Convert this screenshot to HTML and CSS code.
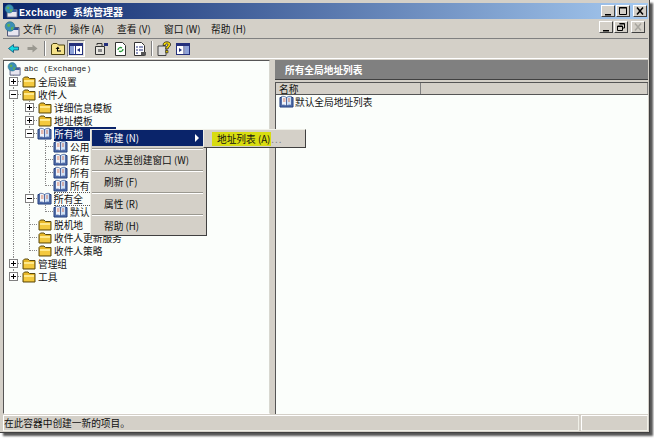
FILE: index.html
```html
<!DOCTYPE html>
<html lang="zh-CN">

<head>
    <meta charset="UTF-8">
    <title>Exchange 系统管理器</title>
    <link rel="stylesheet" href="styles.css">
</head>

<body>
    <!-- shared icons -->
    <svg class="defs" width="0" height="0">
        <symbol id="folder" viewBox="0 0 14 13">
            <path d="M1 3.500 2.500 2H6l1.500 1.500H13V12H1Z" fill="#e8b828" stroke="#5a4a10" stroke-width="1"/>
            <path d="M2 5h10v2H2Z" fill="#ffe98a"/>
            <path d="M2 7h10v4H2Z" fill="#f3c93e"/>
        </symbol>
        <symbol id="book" viewBox="0 0 15 13">
            <path d="M1 2.500h13V12H1Z" fill="#5a78b8" stroke="#1f3a78"/>
            <path d="M2.500 1.500C4.500 1 6 1.500 7.500 2.500V11C6 10 4.500 9.800 2.500 10.300Z" fill="#eef3fb" stroke="#33508e" stroke-width=".7"/>
            <path d="M12.500 1.500C10.500 1 9 1.500 7.500 2.500V11C9 10 10.500 9.800 12.500 10.300Z" fill="#cfe0f5" stroke="#33508e" stroke-width=".7"/>
            <path d="M4 4h2.500M4 6h2.500M9 4h2M9 6h2" stroke="#d0603a" stroke-width=".8"/>
        </symbol>
        <symbol id="mmc" viewBox="0 0 16 16">
            <path d="M3.500 6.500H15V15H3.500Z" fill="#e8e6f0" stroke="#50587a"/>
            <path d="M4 7h10.500v2H4Z" fill="#2c4f9c"/>
            <circle cx="6" cy="5.500" r="4.800" fill="#3a8fb8" stroke="#2c6f80" stroke-width=".6"/>
            <path d="M3 3.500C5 2 7 3 6 5 5 7 3 6 3 3.500ZM7 6.500 9.500 5.500 9 8.500 7 9Z" fill="#5cae5a"/>
        </symbol>
        <symbol id="plus" viewBox="0 0 9 9">
            <rect x=".5" y=".5" width="8" height="8" fill="#fff" stroke="#808080"/>
            <path d="M2 4.500h5M4.500 2v5" stroke="#000"/>
        </symbol>
        <symbol id="minus" viewBox="0 0 9 9">
            <rect x=".5" y=".5" width="8" height="8" fill="#fff" stroke="#808080"/>
            <path d="M2 4.500h5" stroke="#000"/>
        </symbol>
    </svg>

    <div class="window">
        <div class="titlebar">
            <svg class="title-icon" width="14" height="14"><use href="#mmc"/></svg>
            <span class="title-text">Exchange 系统管理器</span>
            <div class="caption-btns">
                <button class="cap-btn"><svg width="12" height="10"><path d="M3 8h6v1.500H3Z" fill="#000"/></svg></button>
                <button class="cap-btn"><svg width="12" height="10"><path d="M2.500 1.500h7v7h-7ZM2 2h8" fill="none" stroke="#000"/></svg></button>
                <button class="cap-btn gap"><svg width="12" height="10"><path d="M3 1.500 9 8.500M9 1.500 3 8.500" stroke="#000" stroke-width="1.500"/></svg></button>
            </div>
        </div>

        <div class="menubar">
            <svg class="menu-icon" width="16" height="16"><use href="#mmc"/></svg>
            <span class="menu-item">文件 (F)</span>
            <span class="menu-item">操作 (A)</span>
            <span class="menu-item">查看 (V)</span>
            <span class="menu-item">窗口 (W)</span>
            <span class="menu-item">帮助 (H)</span>
            <div class="mdi-btns">
                <button class="cap-btn"><svg width="12" height="10"><path d="M3 8h6v1.500H3Z" fill="#000"/></svg></button>
                <button class="cap-btn"><svg width="12" height="10"><path d="M4.500 1.500h5v4.500h-1.500M2.500 4h5v4.500h-5ZM2.500 4.500h5M4.500 2h5" fill="none" stroke="#000"/></svg></button>
                <button class="cap-btn gap"><svg width="12" height="10"><path d="M3 1.500 9 8.500M9 1.500 3 8.500" stroke="#a8a69f" stroke-width="1.500"/></svg></button>
            </div>
        </div>

        <div class="toolbar">
            <svg class="tool" width="11" height="11"><path d="M.5 5.500 5.500 1.500V4h5v3h-5v2.500Z" fill="#18d8e0" stroke="#00406a" stroke-width=".7"/></svg>
            <svg class="tool fwd" width="11" height="11"><path d="M10.500 5.500 5.500 1.500V4H.5v3h5v2.500Z" fill="#9a9890"/></svg>
            <span class="sep"></span>
            <svg class="tool" width="14" height="13"><path d="M.5 3 2 1.500h4L7.500 3h6v9.500H.5Z" fill="#f5e28a" stroke="#4a4210"/><path d="M7 4.500 4.500 7H6v2.500h4V8.500H7V7h1.500Z" fill="#000"/></svg>
            <span class="tool-pressed"><svg width="14" height="12"><rect x=".5" y=".5" width="13" height="11" fill="#fff" stroke="#24307c"/><rect x="1" y="1" width="12" height="2" fill="#24307c"/><path d="M1 3h4v8H1Z" fill="#8ea2d8"/><path d="M6.500 3v8" stroke="#24307c"/><path d="M8 7 11 5v4Z" fill="#24307c"/></svg></span>
            <svg class="tool" width="15" height="13"><path d="M1.500 4.500h9v8h-9Z" fill="#e8e6e0" stroke="#333"/><path d="M3 3V1.500h5V4" fill="none" stroke="#333"/><path d="M4 7h4v3H4Z" fill="#888"/><path d="M10 1h4v3h-4Z" fill="#24307c"/></svg>
            <svg class="tool t2" width="13" height="14"><path d="M1.500.5h7l3 3v10h-10Z" fill="#fff" stroke="#333"/><path d="M4 8a2.500 2.500 0 0 1 4-2M9 7a2.500 2.500 0 0 1-4 2" fill="none" stroke="#2a9a3a" stroke-width="1.300"/></svg>
            <svg class="tool t2b" width="14" height="14"><path d="M1.500.5h7l3 3v10h-10Z" fill="#fff" stroke="#333"/><path d="M3 5h2M3 8h2M3 11h2M6 5h4M6 8h4" stroke="#24307c"/><path d="M8 10h5v3.500H8Z" fill="#555"/></svg>
            <span class="sep sep2"></span>
            <svg class="tool" width="15" height="15"><path d="M1 5h8v9.500H1Z" fill="#ddd" stroke="#444"/><path d="M6 4.500C6 1.500 8 .8 10 .8s4 1.200 3.500 3.200c-.4 2-2.500 2-2.500 4H8.700c0-3 2.300-2.800 2.300-4.200 0-1.400-2.600-1.400-2.700.7Z" fill="#f5d800" stroke="#222" stroke-width=".8"/><path d="M8.700 9.500H11v2.300H8.700Z" fill="#f5d800" stroke="#222" stroke-width=".7"/></svg>
            <svg class="tool t3" width="14" height="12"><rect x=".5" y=".5" width="13" height="11" fill="#fff" stroke="#24307c"/><rect x="1" y="1" width="12" height="2" fill="#24307c"/><path d="M9 3h4v8H9Z" fill="#8ea2d8"/><path d="M8 3v8" stroke="#24307c"/><path d="M6 7 3 5v4Z" fill="#24307c"/></svg>
        </div>

        <div class="panes">
            <div class="tree">
                <div class="row"><svg class="root-icon" width="16" height="14"><use href="#mmc"/></svg><span class="latin">abc (Exchange)</span></div>
                <div class="row"><span class="cell tee"><svg width="9" height="9"><use href="#plus"/></svg></span><svg class="ic" width="14" height="13"><use href="#folder"/></svg><span>全局设置</span></div>
                <div class="row"><span class="cell tee"><svg width="9" height="9"><use href="#minus"/></svg></span><svg class="ic" width="14" height="13"><use href="#folder"/></svg><span>收件人</span></div>
                <div class="row"><span class="cell line"></span><span class="cell tee"><svg width="9" height="9"><use href="#plus"/></svg></span><svg class="ic" width="14" height="13"><use href="#folder"/></svg><span>详细信息模板</span></div>
                <div class="row"><span class="cell line"></span><span class="cell tee"><svg width="9" height="9"><use href="#plus"/></svg></span><svg class="ic" width="14" height="13"><use href="#folder"/></svg><span>地址模板</span></div>
                <div class="row"><span class="cell line"></span><span class="cell tee"><svg width="9" height="9"><use href="#minus"/></svg></span><svg class="bk" width="15" height="13"><use href="#book"/></svg><span class="selected">所有地</span></div>
                <div class="row"><span class="cell line"></span><span class="cell line"></span><span class="cell tee"></span><svg class="bk" width="15" height="13"><use href="#book"/></svg><span>公用</span></div>
                <div class="row"><span class="cell line"></span><span class="cell line"></span><span class="cell tee"></span><svg class="bk" width="15" height="13"><use href="#book"/></svg><span>所有</span></div>
                <div class="row"><span class="cell line"></span><span class="cell line"></span><span class="cell tee"></span><svg class="bk" width="15" height="13"><use href="#book"/></svg><span>所有</span></div>
                <div class="row"><span class="cell line"></span><span class="cell line"></span><span class="cell last"></span><svg class="bk" width="15" height="13"><use href="#book"/></svg><span>所有</span></div>
                <div class="row"><span class="cell line"></span><span class="cell tee"><svg width="9" height="9"><use href="#minus"/></svg></span><svg class="bk" width="15" height="13"><use href="#book"/></svg><span class="focused">所有全</span></div>
                <div class="row"><span class="cell line"></span><span class="cell line"></span><span class="cell last"></span><svg class="bk" width="15" height="13"><use href="#book"/></svg><span>默认</span></div>
                <div class="row"><span class="cell line"></span><span class="cell tee"></span><svg class="ic" width="14" height="13"><use href="#folder"/></svg><span>脱机地</span></div>
                <div class="row"><span class="cell line"></span><span class="cell tee"></span><svg class="ic" width="14" height="13"><use href="#folder"/></svg><span>收件人更新服务</span></div>
                <div class="row"><span class="cell line"></span><span class="cell last"></span><svg class="ic" width="14" height="13"><use href="#folder"/></svg><span>收件人策略</span></div>
                <div class="row"><span class="cell tee"><svg width="9" height="9"><use href="#plus"/></svg></span><svg class="ic" width="14" height="13"><use href="#folder"/></svg><span>管理组</span></div>
                <div class="row"><span class="cell last"><svg width="9" height="9"><use href="#plus"/></svg></span><svg class="ic" width="14" height="13"><use href="#folder"/></svg><span>工具</span></div>
            </div>

            <div class="right">
                <div class="right-head">所有全局地址列表</div>
                <div class="list">
                    <div class="columns">
                        <span class="col col-name">名称</span>
                        <span class="col col-rest"></span>
                    </div>
                    <div class="list-row"><svg width="15" height="13"><use href="#book"/></svg><span>默认全局地址列表</span></div>
                </div>
            </div>
        </div>

        <div class="statusbar">
            <div class="status-main">在此容器中创建一新的项目。</div>
            <div class="status-side"></div>
        </div>

        <!-- context menu -->
        <div class="ctx-menu">
            <div class="ctx-item active">新建 (N)<span class="arrow"></span></div>
            <div class="ctx-sep"></div>
            <div class="ctx-item">从这里创建窗口 (W)</div>
            <div class="ctx-sep"></div>
            <div class="ctx-item">刷新 (F)</div>
            <div class="ctx-sep"></div>
            <div class="ctx-item">属性 (R)</div>
            <div class="ctx-sep"></div>
            <div class="ctx-item">帮助 (H)</div>
        </div>
        <div class="sub-menu"><span class="marked">地址列表 (A)</span><span class="dots">...</span></div>
    </div>
</body>

</html>
```

FILE: styles.css
```css
html,
body {
    margin: 0;
    padding: 0;
    background-color: #ffffff;
}

body {
    width: 654px;
    height: 439px;
    overflow: hidden;
    font-family: "Noto Sans CJK SC", sans-serif;
    font-size: 9.7px;
    color: #111111;
}

.defs {
    display: block;
    height: 0;
}

.window {
    position: relative;
    box-sizing: border-box;
    width: 650px;
    height: 433px;
    padding: 3px 1px 1px 3px;
    display: flex;
    flex-direction: column;
    background-color: #d4d0c8;
    border-right: 1px solid #404040;
    border-bottom: 1px solid #404040;
    box-shadow: 3px 3px 2px #555555;
}

.titlebar {
    height: 16px;
    flex: none;
    display: flex;
    align-items: center;
    padding: 0 1px;
    background: linear-gradient(to right, #0a246a, #a6caf0);
    color: #ffffff;
    font-weight: bold;
}

.title-text {
    margin-left: 1px;
    font-family: "Liberation Mono", "Noto Sans CJK SC", monospace;
    font-size: 10px;
}

.caption-btns,
.mdi-btns {
    margin-left: auto;
    display: flex;
    align-items: center;
    gap: 1px;
}

.mdi-btns {
    margin-right: 1px;
    margin-top: -4px;
}

.cap-btn {
    width: 14px;
    height: 12px;
    padding: 0;
    display: flex;
    align-items: center;
    justify-content: center;
    background-color: #d4d0c8;
    border: 1px solid;
    border-color: #ffffff #404040 #404040 #ffffff;
}

.cap-btn.gap {
    margin-left: 2px;
}

.menubar {
    height: 20px;
    flex: none;
    display: flex;
    align-items: center;
    padding-right: 2px;
    border-bottom: 1px solid #808080;
    box-sizing: border-box;
}

.menu-icon {
    margin: 0 3px 0 1px;
}

.menu-item {
    width: 47px;
    white-space: pre;
}

.toolbar {
    height: 20px;
    flex: none;
    display: flex;
    align-items: center;
    padding-left: 5px;
    border-bottom: 1px solid #ffffff;
    box-sizing: border-box;
}

.tool {
    flex: none;
}

.fwd {
    margin-left: 8px;
}

.sep {
    width: 1px;
    height: 15px;
    margin: 0 5px 0 6px;
    background-color: #808080;
    border-right: 1px solid #ffffff;
}

.tool-pressed {
    width: 18px;
    height: 17px;
    margin: 0 9px 0 2px;
    display: flex;
    align-items: center;
    justify-content: center;
    background-color: #e4e2dc;
    border: 1px solid;
    border-color: #808080 #ffffff #ffffff #808080;
    box-sizing: border-box;
}

.t2 {
    margin-left: 5px;
}

.t2b {
    margin-left: 6px;
}

.sep2 {
    margin: 0 4px 0 4px;
}

.t3 {
    margin-left: 4px;
}

.panes {
    flex: 1;
    min-height: 0;
    display: flex;
    margin-top: 1px;
}

.tree {
    width: 267px;
    box-sizing: border-box;
    padding: 1px 0 0 1px;
    background-color: #fbfefb;
    border: 1px solid;
    border-color: #555555 #d8d8d0 #ffffff #555555;
    overflow: hidden;
}

.row {
    height: 13px;
    display: flex;
    align-items: center;
    white-space: nowrap;
}

.root-icon {
    margin-left: 1px;
}

.latin {
    font-family: "Liberation Mono", monospace;
    font-size: 8px;
    color: #222222;
    margin-left: 2px;
}

.cell {
    width: 16px;
    height: 13px;
    flex: none;
    box-sizing: border-box;
    padding-left: 4px;
    display: flex;
    align-items: center;
}

/* dotted tree lines, drawn with gradients */
.line {
    background: repeating-linear-gradient(#888888 0 1px, transparent 1px 2px) 8px 0 / 1px 100% no-repeat;
}

.tee {
    background:
        repeating-linear-gradient(#888888 0 1px, transparent 1px 2px) 8px 0 / 1px 100% no-repeat,
        repeating-linear-gradient(to right, #888888 0 1px, transparent 1px 2px) 9px 6px / 7px 1px no-repeat;
}

.last {
    background:
        repeating-linear-gradient(#888888 0 1px, transparent 1px 2px) 8px 0 / 1px 7px no-repeat,
        repeating-linear-gradient(to right, #888888 0 1px, transparent 1px 2px) 9px 6px / 7px 1px no-repeat;
}

.ic {
    flex: none;
    margin: 0 2px 0 1px;
}

.bk {
    flex: none;
    margin-right: 2px;
}

.selected {
    width: 62px;
    background-color: #0a246a;
    color: #ffffff;
}

.focused {
    width: 62px;
    outline: 1px dotted #555555;
    outline-offset: -1px;
}

.right {
    flex: 1;
    min-width: 0;
    display: flex;
    flex-direction: column;
    margin-left: 5px;
}

.right-head {
    height: 19px;
    flex: none;
    display: flex;
    align-items: center;
    padding-left: 10px;
    background-color: #808080;
    color: #ffffff;
    font-weight: bold;
    border-bottom: 1px solid #404040;
    margin-bottom: 2px;
}

.list {
    flex: 1;
    background-color: #fbfefb;
    border-left: 1px solid #555555;
    border-top: 1px solid #555555;
}

.columns {
    height: 11px;
    display: flex;
    background-color: #d4d0c8;
    border-bottom: 1px solid #555555;
}

.col {
    display: flex;
    align-items: center;
    padding-left: 3px;
    box-sizing: border-box;
    border-right: 1px solid #808080;
}

.col-name {
    width: 145px;
}

.col-rest {
    flex: 1;
}

.list-row {
    height: 13px;
    display: flex;
    align-items: center;
    gap: 1px;
    padding: 0 0 0 3px;
}

.statusbar {
    height: 16px;
    flex: none;
    display: flex;
    gap: 2px;
    margin-top: 1px;
}

.status-main,
.status-side {
    display: flex;
    align-items: center;
    border: 1px solid;
    border-color: #ffffff #f0f0e8 #f0f0e8 #ffffff;
}

.status-main {
    width: 574px;
}

.status-side {
    flex: 1;
}

.ctx-menu {
    position: absolute;
    left: 90px;
    top: 129px;
    width: 117px;
    height: 107px;
    box-sizing: border-box;
    padding: 0 3px 0 1px;
    background-color: #d4d0c8;
    border: 1px solid;
    border-color: #f0f0e8 #404040 #404040 #f0f0e8;
}

.ctx-item {
    height: 16px;
    display: flex;
    align-items: center;
    padding-left: 12px;
    white-space: pre;
}

.ctx-item.active {
    background-color: #0a246a;
    color: #ffffff;
    position: relative;
}

.arrow {
    position: absolute;
    right: 4px;
    top: 4px;
    border-left: 4px solid #ffffff;
    border-top: 4px solid transparent;
    border-bottom: 4px solid transparent;
}

.ctx-sep {
    height: 2px;
    margin: 2px 0;
    background-color: #9a9890;
    border-bottom: 1px solid #ffffff;
    box-sizing: border-box;
}

.sub-menu {
    position: absolute;
    left: 203px;
    top: 129px;
    width: 103px;
    height: 19px;
    box-sizing: border-box;
    display: flex;
    align-items: center;
    padding-left: 8px;
    background-color: #d4d0c8;
    border: 1px solid;
    border-color: #f0f0e8 #404040 #404040 #f0f0e8;
}

.marked {
    background-color: #d8dc10;
    padding: 0 1px 0 5px;
    white-space: pre;
}

.dots {
    color: #777777;
    letter-spacing: 1px;
}
```
